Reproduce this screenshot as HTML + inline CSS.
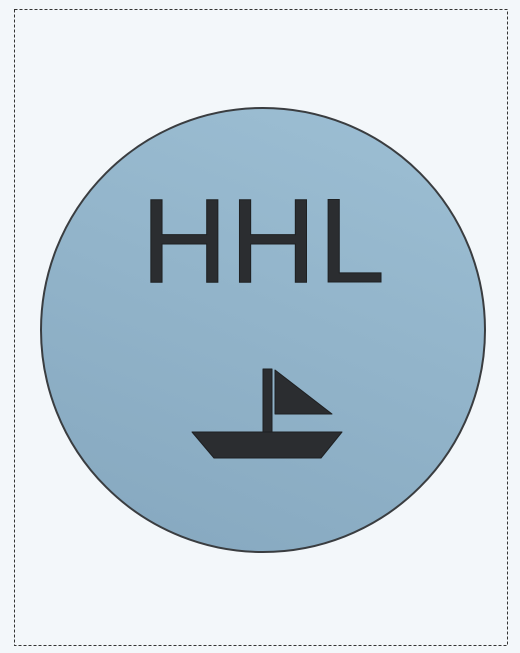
<!DOCTYPE html>
<html><head><meta charset="utf-8"><style>
html,body{margin:0;padding:0;background:#f3f7fa;width:520px;height:653px;overflow:hidden}
</style></head><body>
<svg width="520" height="653" viewBox="0 0 520 653" xmlns="http://www.w3.org/2000/svg">
<defs>
<linearGradient id="g" x1="0.8" y1="0" x2="0.4" y2="1">
<stop offset="0" stop-color="#9cbed3"/>
<stop offset="1" stop-color="#88aac1"/>
</linearGradient>
</defs>
<rect x="14.5" y="9.5" width="493" height="636" fill="none" stroke="#333" stroke-width="1" stroke-dasharray="3,2"/>
<circle cx="263" cy="330" r="222" fill="url(#g)" stroke="#3a3d40" stroke-width="2"/>
<text x="141" y="282" font-family="Liberation Sans, sans-serif" font-size="120" fill="#2b2d30" stroke="#1e2022" stroke-width="1" textLength="244" lengthAdjust="spacing">HHL</text>
<g fill="#2b2d30" stroke="#1e2022" stroke-width="1" stroke-linejoin="round">
<rect x="263" y="369" width="9" height="64"/>
<polygon points="275,370 275,414 332,414"/>
<polygon points="192,432 342,432 321,458 214,458"/>
</g>
</svg>
</body></html>
